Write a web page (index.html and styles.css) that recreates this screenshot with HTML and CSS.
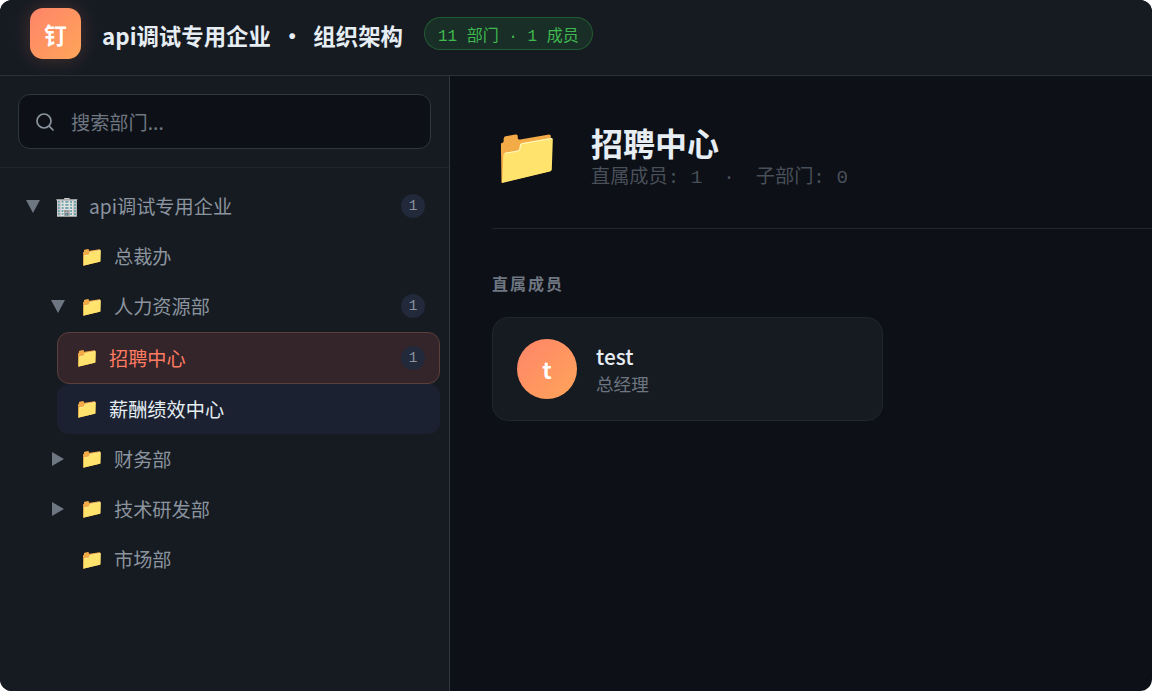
FILE: index.html
```html
<!DOCTYPE html>
<html lang="zh-CN">
<head>
<meta charset="utf-8">
<title>组织架构</title>
<link rel="stylesheet" href="styles.css">
</head>
<body>
<div class="app">
  <header class="header">
    <div class="logo">钉</div>
    <h1 class="title">api调试专用企业 <span class="dot">·</span> 组织架构</h1>
    <div class="pill">11 部门 · 1 成员</div>
  </header>
  <div class="body">
    <aside class="sidebar">
      <div class="search-wrap">
        <div class="search">
          <svg class="search-icon" viewBox="0 0 20 20" width="20" height="20"><circle cx="9" cy="9" r="7" fill="none" stroke="#8b949e" stroke-width="1.7"/><path d="M14.2 14.2 18 18" stroke="#8b949e" stroke-width="1.7" stroke-linecap="round"/></svg>
          <span class="placeholder">搜索部门...</span>
        </div>
      </div>
      <div class="tree">
        <div class="row l0">
          <span class="caret"><svg viewBox="0 0 14 13" width="14" height="13"><path d="M0 0h14L7 13z"/></svg></span>
          <span class="icon">🏢</span>
          <span class="name">api调试专用企业</span>
          <span class="count">1</span>
        </div>
        <div class="row l1">
          <span class="caret"></span>
          <span class="icon">📁</span>
          <span class="name">总裁办</span>
        </div>
        <div class="row l1">
          <span class="caret"><svg viewBox="0 0 14 13" width="14" height="13"><path d="M0 0h14L7 13z"/></svg></span>
          <span class="icon">📁</span>
          <span class="name">人力资源部</span>
          <span class="count">1</span>
        </div>
        <div class="row l2 active">
          <span class="caret"></span>
          <span class="icon">📁</span>
          <span class="name">招聘中心</span>
          <span class="count">1</span>
        </div>
        <div class="row l2 hover">
          <span class="caret"></span>
          <span class="icon">📁</span>
          <span class="name">薪酬绩效中心</span>
        </div>
        <div class="row l1">
          <span class="caret"><svg viewBox="0 0 12 14" width="12" height="14"><path d="M0 0v14l12-7z"/></svg></span>
          <span class="icon">📁</span>
          <span class="name">财务部</span>
        </div>
        <div class="row l1">
          <span class="caret"><svg viewBox="0 0 12 14" width="12" height="14"><path d="M0 0v14l12-7z"/></svg></span>
          <span class="icon">📁</span>
          <span class="name">技术研发部</span>
        </div>
        <div class="row l1">
          <span class="caret"></span>
          <span class="icon">📁</span>
          <span class="name">市场部</span>
        </div>
      </div>
    </aside>
    <main class="main">
      <section class="dept">
        <span class="dept-icon">📁</span>
        <div class="dept-info">
          <h2 class="dept-name">招聘中心</h2>
          <div class="dept-meta"><span>直属成员: 1</span><span>·</span><span>子部门: 0</span></div>
        </div>
      </section>
      <h3 class="section-title">直属成员</h3>
      <div class="card">
        <div class="avatar">t</div>
        <div class="person">
          <div class="person-name">test</div>
          <div class="person-role">总经理</div>
        </div>
      </div>
    </main>
  </div>
</div>
</body>
</html>
```
FILE: styles.css
```css
* { box-sizing: border-box; }
html, body { margin: 0; height: 100%; background: #fff; }
body {
  font-family: "Noto Sans CJK SC", "Noto Sans", sans-serif;
  overflow: hidden;
}
.app {
  width: 1152px;
  height: 691px;
  border-radius: 12px;
  overflow: hidden;
  background: #0d1017;
  display: flex;
  flex-direction: column;
}
.header {
  height: 76px;
  flex: none;
  display: flex;
  align-items: flex-start;
  padding: 8px 0 0 30px;
  background: #161b22;
  border-bottom: 1px solid #2a2f38;
}
.logo {
  width: 51px;
  height: 51px;
  border-radius: 13px;
  background: linear-gradient(135deg, #ff8469, #ffa559);
  box-shadow: 0 0 19px rgba(255, 132, 105, .22);
  color: #fff;
  font-size: 22.4px;
  font-weight: 700;
  display: flex;
  align-items: center;
  justify-content: center;
}
.title {
  margin: 11px 0 0 21px;
  font-size: 22.4px;
  line-height: 32px;
  font-weight: 700;
  color: #e6edf3;
  white-space: pre;
}
.dot { margin: 0 5px; }
.pill {
  margin: 9px 0 0 21px;
  height: 33px;
  padding: 0 13px;
  display: flex;
  align-items: center;
  border-radius: 17px;
  border: 1px solid #238636;
  border-color: rgba(46, 160, 67, .4);
  background: rgba(46, 160, 67, .15);
  color: #3fb950;
  font-family: "Liberation Mono", "Noto Sans CJK SC", monospace;
  font-size: 16px;
  white-space: pre;
}
.body { flex: 1; display: flex; min-height: 0; }
.sidebar {
  width: 450px;
  flex: none;
  background: #161b22;
  border-right: 1px solid #30363d;
}
.search-wrap {
  padding: 18px 18px 18px;
  border-bottom: 1px solid #21262d;
}
.search {
  height: 55px;
  width: 413px;
  display: flex;
  align-items: center;
  padding: 0 16px;
  gap: 16px;
  background: #0d1117;
  border: 1px solid #30363d;
  border-radius: 12px;
}
.placeholder { font-size: 19.2px; color: #6e7681; }
.tree { padding: 13px 9px 0 9px; }
.row {
  height: 50.2px;
  display: flex;
  align-items: center;
  font-size: 19.2px;
  color: #8b949e;
  border-radius: 12px;
  border: 1px solid transparent;
}
.l0 { padding-left: 15px; }
.l1 { padding-left: 40px; margin-left: 0; }
.l2 { margin-left: 48px; padding-left: 17px; }
.caret {
  width: 16px;
  height: 16px;
  flex: none;
  display: flex;
  align-items: center;
  justify-content: center;
  fill: #6e7681;
  margin-right: 14px;
}
.l2 .caret { display: none; }
.icon {
  font-size: 19.2px;
  width: 22px;
  margin-right: 12px;
  flex: none;
  text-align: center;
  font-family: "Noto Color Emoji", sans-serif;
}
.name { flex: 1; }
.count {
  width: 24px;
  height: 24px;
  border-radius: 50%;
  margin-right: 14px;
  background: #21293a;
  color: #8b949e;
  font-family: "Liberation Mono", monospace;
  font-size: 14.4px;
  display: flex;
  align-items: center;
  justify-content: center;
}
.active {
  height: 52px;
  background: #332529;
  border-color: #5c3f3d;
  color: #ff7b62;
}
.hover {
  height: 50px;
  background: #1b2130;
  color: #e6edf3;
}
.main { flex: 1; padding: 0 0 0 42px; min-width: 0; }
.dept {
  display: flex;
  align-items: center;
  height: 153px;
  padding-top: 8px;
  border-bottom: 1px solid #21262d;
}
.dept-icon {
  width: 71px;
  margin-left: 0;
  margin-right: 28px;
  font-size: 56px;
  line-height: 1;
  font-family: "Noto Color Emoji", sans-serif;
}
.dept-name { margin: 0; font-size: 32px; line-height: 44px; color: #e6edf3; font-weight: 700; }
.dept-meta {
  display: flex;
  gap: 21px;
  font-family: "Liberation Mono", "Noto Sans CJK SC", monospace;
  font-size: 19.2px;
  line-height: 28px;
  color: #484f58;
}
.section-title {
  margin: 42px 0 22px;
  font-size: 16px;
  line-height: 24px;
  font-weight: 700;
  letter-spacing: 2px;
  color: #6e7681;
}
.card {
  width: 391px;
  height: 104px;
  display: flex;
  align-items: center;
  padding: 0 24px;
  gap: 19px;
  background: #161b22;
  border: 1px solid #21262d;
  border-radius: 16px;
}
.avatar {
  width: 60px;
  height: 60px;
  border-radius: 50%;
  background: linear-gradient(135deg, #ff8469, #ffa559);
  color: #fff;
  font-size: 22.4px;
  font-weight: 700;
  display: flex;
  align-items: center;
  justify-content: center;
}
.person-name { font-size: 20.8px; line-height: 30px; font-weight: 500; color: #e6edf3; }
.person-role { font-size: 17.6px; line-height: 26px; color: #6e7681; }
```
